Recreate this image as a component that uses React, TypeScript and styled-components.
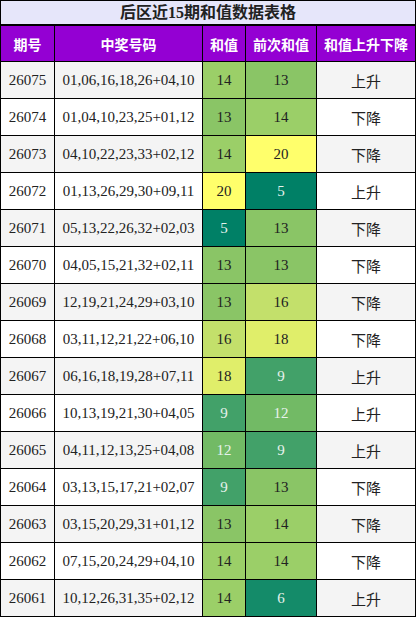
import React from "react";
import styled, { createGlobalStyle } from "styled-components";

const Global = createGlobalStyle`
  html, body { margin: 0; padding: 0; background: #fff; }
  body { font-family: "Liberation Serif", "Noto Sans CJK SC", serif; }
`;

const Grid = styled.div`
  display: grid;
  grid-template-columns: 54px 148px 43px 71px 99px;
  width: 416px;
  box-sizing: border-box;
  border-left: 1px solid #000;
  border-top: 1px solid #000;
`;

const Title = styled.div`
  grid-column: 1 / -1;
  height: 25px;
  box-sizing: border-box;
  border-right: 1px solid #000;
  border-bottom: 2px solid #000;
  background: #e6e6fa;
  color: #222;
  font-size: 16px;
  font-weight: bold;
  display: flex;
  align-items: center;
  justify-content: center;
  line-height: 1;
`;

const Head = styled.div`
  height: 36px;
  box-sizing: border-box;
  border-right: 1px solid #000;
  border-bottom: 1px solid #000;
  background: #9400d3;
  color: #fff;
  font-family: "Noto Sans CJK SC", sans-serif;
  font-weight: bold;
  font-size: 14px;
  display: flex;
  align-items: center;
  justify-content: center;
`;

const Cell = styled.div<{ $bg: string; $light?: boolean; $sans?: boolean }>`
  height: 37px;
  box-sizing: border-box;
  border-right: 1px solid #000;
  border-bottom: 1px solid #000;
  background: ${(p) => p.$bg};
  color: ${(p) => (p.$light ? "#e6f2ec" : "#222")};
  font-family: ${(p) =>
    p.$sans ? `"Noto Sans CJK SC", sans-serif` : `"Liberation Serif", "Noto Sans CJK SC", serif`};
  font-size: 15px;
  display: flex;
  align-items: center;
  justify-content: center;
  white-space: nowrap;
`;

const scale: Record<number, string> = {
  5: "#008066",
  6: "#148b69",
  9: "#42a169",
  12: "#72ba65",
  13: "#8ac566",
  14: "#9bcf68",
  16: "#c3e06b",
  18: "#e0ee6a",
  20: "#ffff6b",
};

const rows: [string, string, number, number, string][] = [
  ["26075", "01,06,16,18,26+04,10", 14, 13, "上升"],
  ["26074", "01,04,10,23,25+01,12", 13, 14, "下降"],
  ["26073", "04,10,22,23,33+02,12", 14, 20, "下降"],
  ["26072", "01,13,26,29,30+09,11", 20, 5, "上升"],
  ["26071", "05,13,22,26,32+02,03", 5, 13, "下降"],
  ["26070", "04,05,15,21,32+02,11", 13, 13, "下降"],
  ["26069", "12,19,21,24,29+03,10", 13, 16, "下降"],
  ["26068", "03,11,12,21,22+06,10", 16, 18, "下降"],
  ["26067", "06,16,18,19,28+07,11", 18, 9, "上升"],
  ["26066", "10,13,19,21,30+04,05", 9, 12, "上升"],
  ["26065", "04,11,12,13,25+04,08", 12, 9, "上升"],
  ["26064", "03,13,15,17,21+02,07", 9, 13, "下降"],
  ["26063", "03,15,20,29,31+01,12", 13, 14, "下降"],
  ["26062", "07,15,20,24,29+04,10", 14, 14, "下降"],
  ["26061", "10,12,26,31,35+02,12", 14, 6, "上升"],
];

export default function App() {
  return (
    <>
      <Global />
      <Grid>
        <Title>后区近15期和值数据表格</Title>
        <Head>期号</Head>
        <Head>中奖号码</Head>
        <Head>和值</Head>
        <Head>前次和值</Head>
        <Head>和值上升下降</Head>
        {rows.map(([issue, nums, sum, prev, trend], i) => {
          const bg = i % 2 === 0 ? "#f4f4f4" : "#ffffff";
          return (
            <React.Fragment key={issue}>
              <Cell $bg={bg}>{issue}</Cell>
              <Cell $bg={bg}>{nums}</Cell>
              <Cell $bg={scale[sum]} $light={sum <= 12}>{sum}</Cell>
              <Cell $bg={scale[prev]} $light={prev <= 12}>{prev}</Cell>
              <Cell $bg={bg} $sans>{trend}</Cell>
            </React.Fragment>
          );
        })}
      </Grid>
    </>
  );
}
